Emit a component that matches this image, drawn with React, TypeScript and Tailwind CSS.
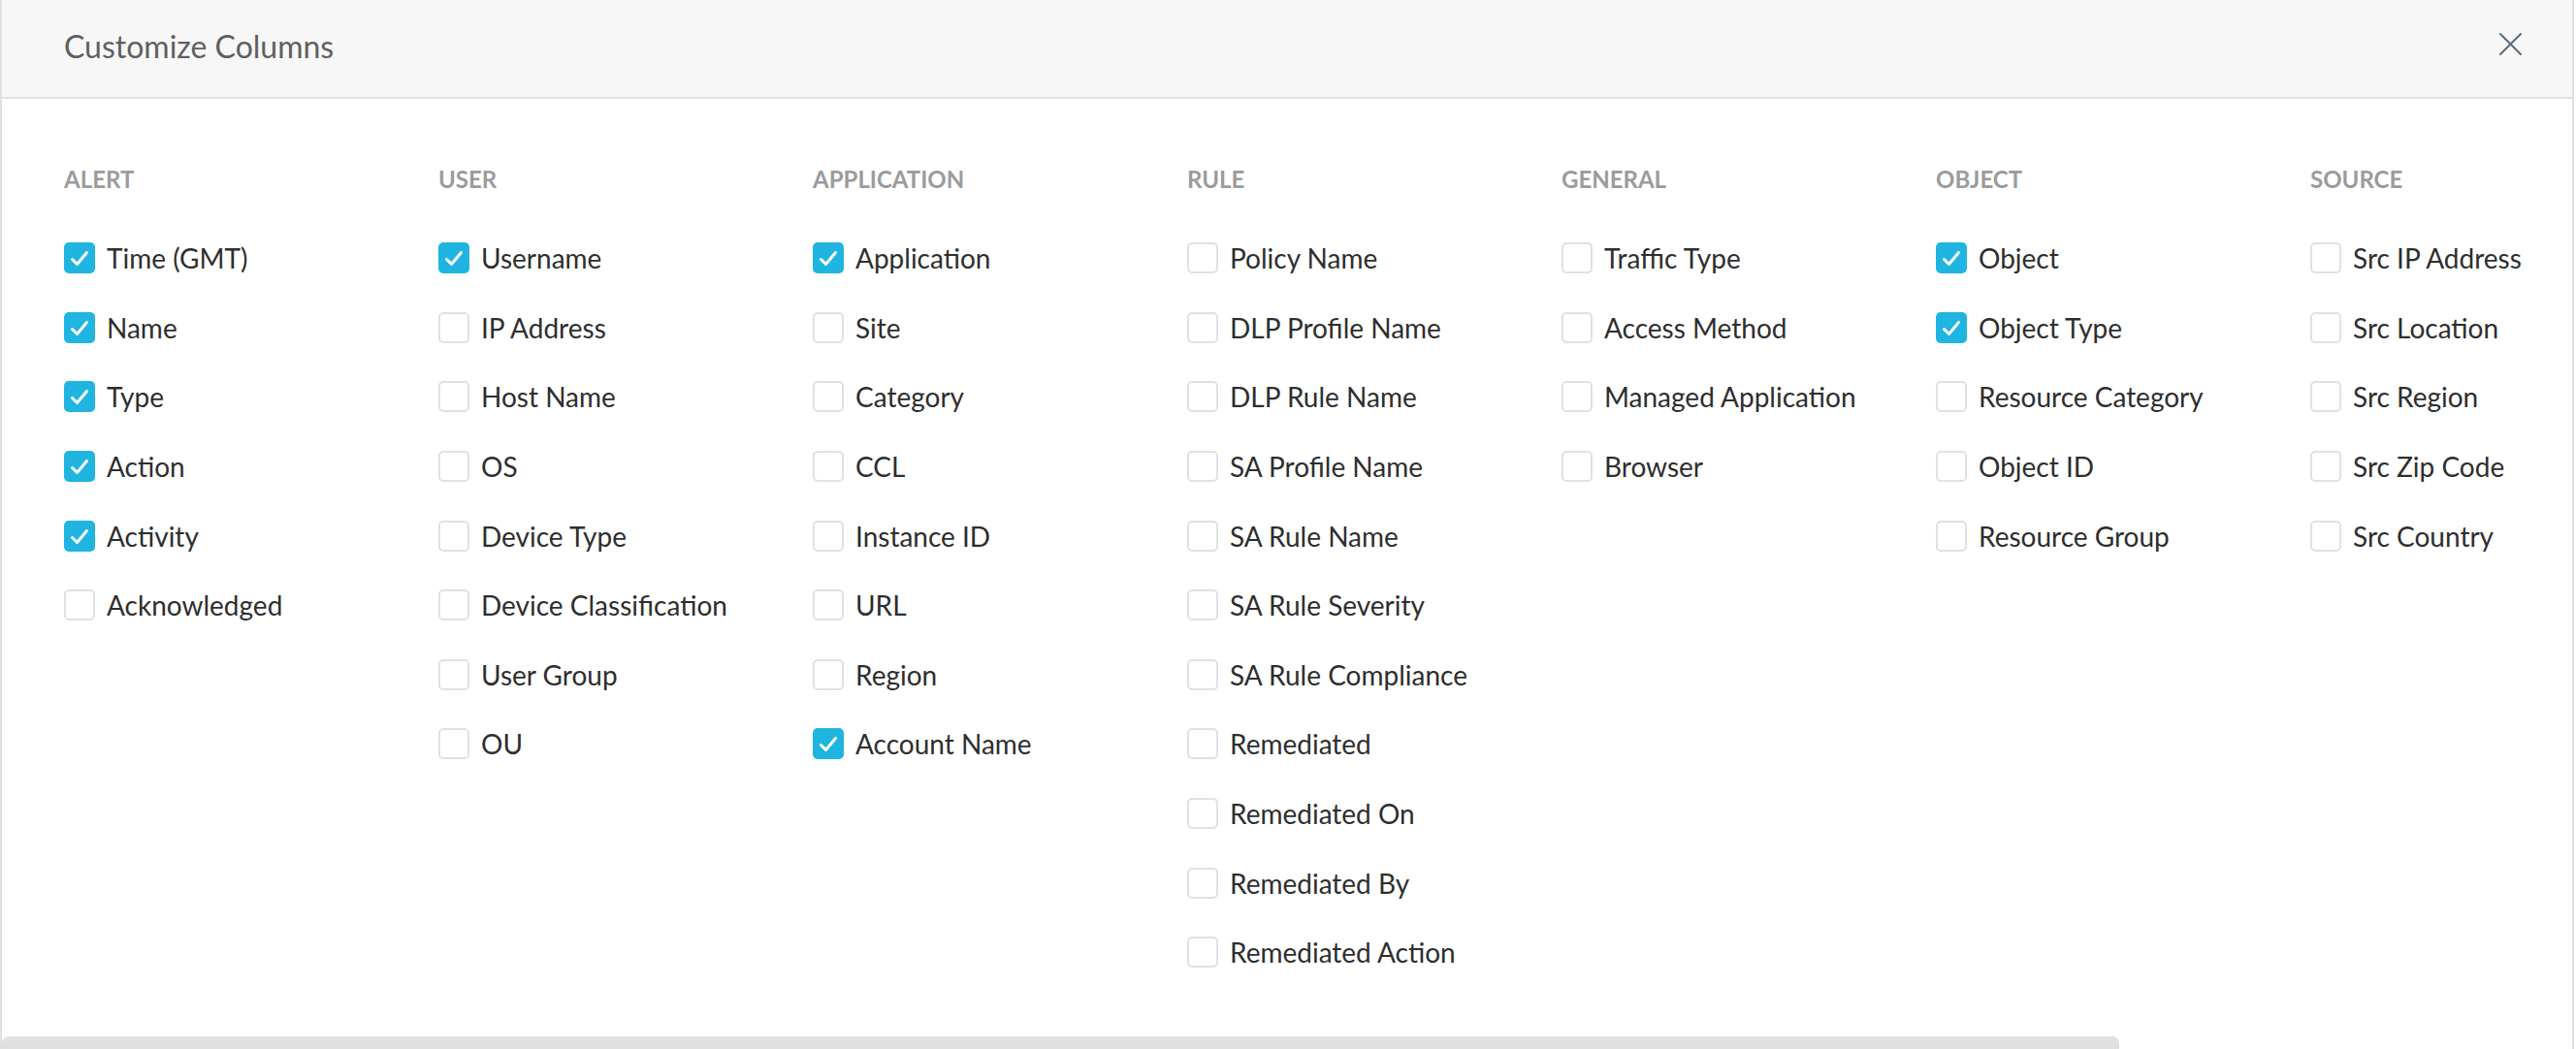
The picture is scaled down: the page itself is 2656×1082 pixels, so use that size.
import React from 'react';

type Item = { label: string; checked?: boolean };
type Group = { title: string; items: Item[] };

const groups: Group[] = [
  {
    title: 'ALERT',
    items: [
      { label: 'Time (GMT)', checked: true },
      { label: 'Name', checked: true },
      { label: 'Type', checked: true },
      { label: 'Action', checked: true },
      { label: 'Activity', checked: true },
      { label: 'Acknowledged' },
    ],
  },
  {
    title: 'USER',
    items: [
      { label: 'Username', checked: true },
      { label: 'IP Address' },
      { label: 'Host Name' },
      { label: 'OS' },
      { label: 'Device Type' },
      { label: 'Device Classification' },
      { label: 'User Group' },
      { label: 'OU' },
    ],
  },
  {
    title: 'APPLICATION',
    items: [
      { label: 'Application', checked: true },
      { label: 'Site' },
      { label: 'Category' },
      { label: 'CCL' },
      { label: 'Instance ID' },
      { label: 'URL' },
      { label: 'Region' },
      { label: 'Account Name', checked: true },
    ],
  },
  {
    title: 'RULE',
    items: [
      { label: 'Policy Name' },
      { label: 'DLP Profile Name' },
      { label: 'DLP Rule Name' },
      { label: 'SA Profile Name' },
      { label: 'SA Rule Name' },
      { label: 'SA Rule Severity' },
      { label: 'SA Rule Compliance' },
      { label: 'Remediated' },
      { label: 'Remediated On' },
      { label: 'Remediated By' },
      { label: 'Remediated Action' },
    ],
  },
  {
    title: 'GENERAL',
    items: [
      { label: 'Traffic Type' },
      { label: 'Access Method' },
      { label: 'Managed Application' },
      { label: 'Browser' },
    ],
  },
  {
    title: 'OBJECT',
    items: [
      { label: 'Object', checked: true },
      { label: 'Object Type', checked: true },
      { label: 'Resource Category' },
      { label: 'Object ID' },
      { label: 'Resource Group' },
    ],
  },
  {
    title: 'SOURCE',
    items: [
      { label: 'Src IP Address' },
      { label: 'Src Location' },
      { label: 'Src Region' },
      { label: 'Src Zip Code' },
      { label: 'Src Country' },
    ],
  },
];

const Checkbox: React.FC<{ checked?: boolean }> = ({ checked }) =>
  checked ? (
    <span className="w-[32px] h-[32px] shrink-0 rounded-[5px] bg-[#1fb5e0] flex items-center justify-center">
      <svg width="32" height="32" viewBox="0 0 32 32" fill="none">
        <polyline points="8.5,17.5 13.5,22.5 23.5,10.5" stroke="#fff" strokeWidth="3" strokeLinecap="round" strokeLinejoin="round" />
      </svg>
    </span>
  ) : (
    <span className="w-[32px] h-[32px] shrink-0 rounded-[5px] border-2 border-[#e1e1e1] bg-white" />
  );

export default function App() {
  return (
    <div className="w-[2656px] h-[1082px] bg-white overflow-hidden font-['Lato','Liberation_Sans',sans-serif]">
      <div className="w-[2654px] h-full border-x-2 border-[#e0e0e0] flex flex-col">
        <div className="h-[102px] shrink-0 bg-[#f7f7f7] border-b-2 border-[#e0e0e0] flex items-center justify-between pl-[64px] pr-[52px]">
          <h1 className="text-[32px] text-[#5f5f5f] leading-none pb-[4px]">Customize Columns</h1>
          <button className="w-[23px] h-[23px] flex items-center justify-center mb-[10px]">
            <svg width="23" height="23" viewBox="0 0 23 23" fill="none">
              <path d="M1 1 L22 22 M22 1 L1 22" stroke="#5b6b7b" strokeWidth="2" strokeLinecap="round" />
            </svg>
          </button>
        </div>

        <div className="flex-1 overflow-hidden pl-[64px] pt-[71px] flex">
          {groups.map((g) => (
            <div key={g.title} className="w-[386px] shrink-0">
              <div className="h-[24px] text-[24px] leading-[24px] font-bold text-[#9b9b9b]">{g.title}</div>
              <div className="mt-[33.5px]">
                {g.items.map((it) => (
                  <div key={it.label} className="h-[71.6px] flex items-center">
                    <Checkbox checked={it.checked} />
                    <span className="ml-[12px] text-[28px] text-[#2e2e2e] whitespace-nowrap">{it.label}</span>
                  </div>
                ))}
              </div>
            </div>
          ))}
        </div>

        <div className="h-[13px] shrink-0">
          <div className="w-[2183px] h-full bg-[#e0e0e0] rounded-t-[7px]" />
        </div>
      </div>
    </div>
  );
}
